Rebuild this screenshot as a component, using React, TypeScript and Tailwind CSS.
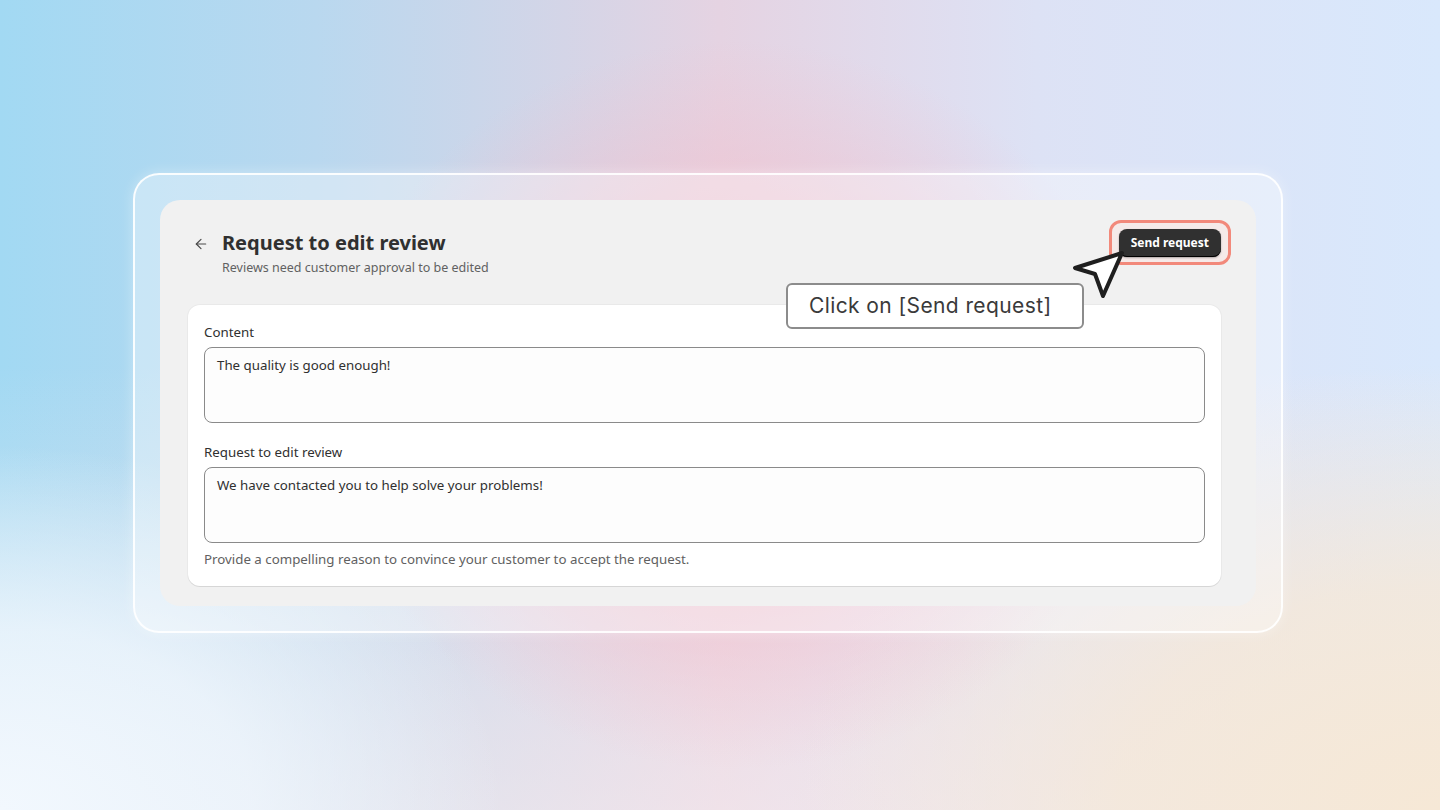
import { ArrowLeft } from "lucide-react";

const ui = { fontFamily: '"Noto Sans", "Open Sans", sans-serif' };

function Field({ label, value }: { label: string; value: string }) {
  return (
    <div className="flex flex-col">
      <label className="text-[13.3px] leading-[18px] text-[#303030]">{label}</label>
      <textarea
        readOnly
        defaultValue={value}
        className="mt-[6px] h-[76px] w-full resize-none rounded-[8px] border border-[#8a8a8a] bg-[#fdfdfd] px-[12px] pt-[8px] text-[13.3px] leading-[18px] text-[#303030] outline-none"
        style={ui}
      />
    </div>
  );
}

export default function App() {
  return (
    <div
      className="relative h-[810px] w-[1440px] overflow-hidden bg-[#e4d9e8] bg-[radial-gradient(28%_45%_at_51%_50%,rgba(243,190,203,1)_0%,rgba(243,190,203,0.6)_50%,transparent_100%),radial-gradient(35%_45%_at_0%_100%,#f2f8fe_0%,rgba(242,248,254,0.75)_50%,transparent_100%),radial-gradient(45%_55%_at_100%_100%,#f6e8d6_0%,rgba(246,232,214,0.75)_50%,transparent_100%),linear-gradient(to_bottom,transparent_0%,transparent_45%,rgba(247,236,238,0.6)_100%),linear-gradient(to_right,#a2d9f3_0%,#b9d8ef_22%,#e5d3e2_50%,#dde2f5_72%,#d9e8fc_100%)]"
      style={ui}
    >
      <div className="pl-[133px] pt-[173px]">
        {/* glass frame */}
        <div className="w-[1150px] rounded-[26px] border-2 border-white/90 bg-white/35 p-[25px] shadow-[0_0_14px_rgba(255,255,255,0.35)]">
          <div className="rounded-[20px] bg-[#f1f1f1] pb-[20px] pl-[28px] pr-[35px] pt-[30px]">
            {/* header */}
            <div className="flex items-start justify-between">
              <div className="flex items-start pl-[5px]">
                <ArrowLeft size={16} strokeWidth={1.8} className="mt-[6px] text-[#4a4a4a]" />
                <div className="ml-[13px] flex flex-col">
                  <h1 className="text-[20px] font-bold leading-[26px] text-[#303030]">Request to edit review</h1>
                  <p className="mt-[3px] text-[12.5px] leading-[18px] text-[#616161]">
                    Reviews need customer approval to be edited
                  </p>
                </div>
              </div>
              <div className="relative -mt-[1px]">
                <div className="absolute -bottom-[8px] -left-[10px] -right-[10px] -top-[9px] rounded-[12px] border-[3px] border-[#f2897b] bg-[#f8e6e4]/60" />
                <button className="relative h-[28px] rounded-[8px] bg-[#303030] px-[12px] text-[12px] font-bold text-white shadow-[inset_0_-1px_0_#000,0_1px_2px_rgba(0,0,0,0.3)]">
                  Send request
                </button>
              </div>
            </div>

            {/* card */}
            <div className="mt-[28px] flex flex-col gap-[20px] rounded-[12px] bg-white px-4 pb-[18px] pt-[18px] shadow-[0_1px_0_rgba(0,0,0,0.08),0_0_0_1px_rgba(0,0,0,0.03)]">
              <Field label="Content" value="The quality is good enough!" />
              <div className="flex flex-col">
                <Field label="Request to edit review" value="We have contacted you to help solve your problems!" />
                <p className="mt-[7px] text-[13.3px] leading-[18px] text-[#616161]">
                  Provide a compelling reason to convince your customer to accept the request.
                </p>
              </div>
            </div>
          </div>
        </div>
      </div>

      {/* callout */}
      <div
        className="absolute left-[786px] top-[283px] flex h-[46px] w-[298px] items-center rounded-[6px] border-2 border-[#8c8c8c] bg-white pl-[21px] text-[21px] tracking-[0.4px] text-[#3a3a3a]"
        style={{ fontFamily: 'Inter, "Noto Sans", sans-serif' }}
      >
        Click on [Send request]
      </div>

      {/* cursor */}
      <svg className="absolute left-[1066px] top-[245px]" width="66" height="60" viewBox="0 0 66 60">
        <polygon
          points="56,8 9,23 29,29 37,51"
          fill="#ffffff"
          stroke="#1f1f1f"
          strokeWidth="4"
          strokeLinejoin="round"
        />
      </svg>
    </div>
  );
}
